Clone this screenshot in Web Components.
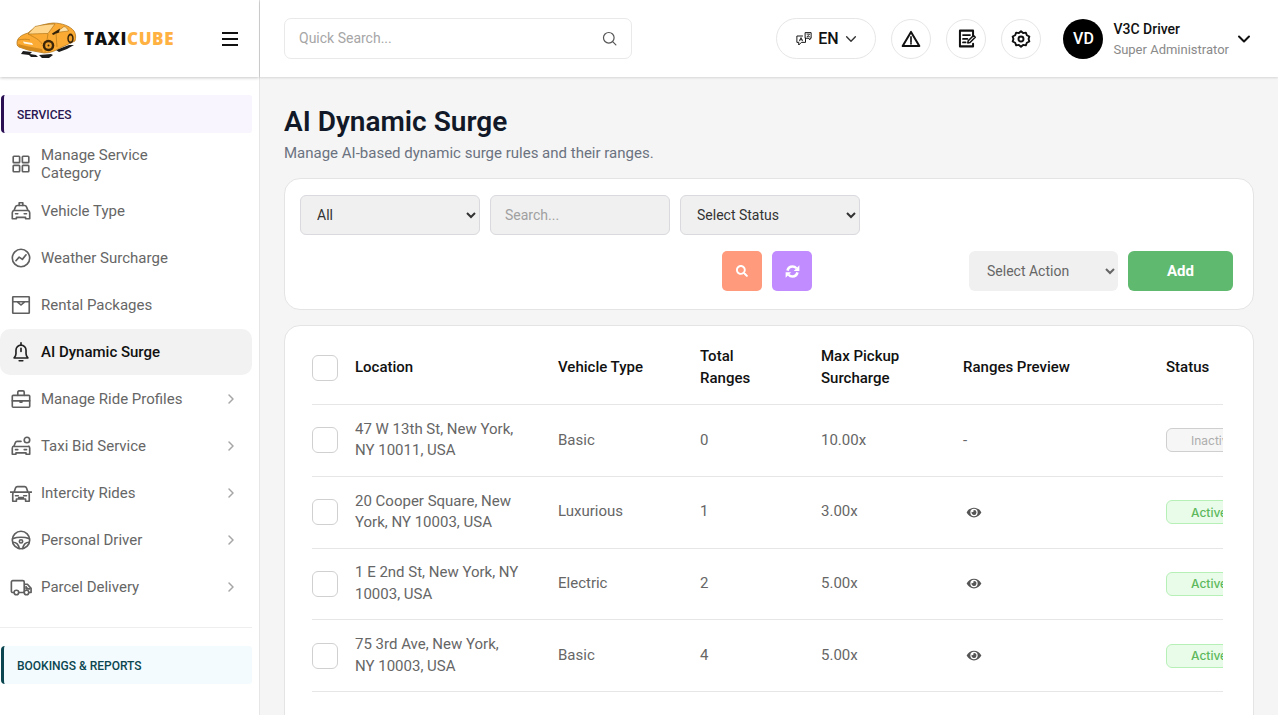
<!DOCTYPE html>
<html lang="en">
<head>
<meta charset="utf-8">
<title>AI Dynamic Surge</title>
<style>
	html, body { margin: 0; height: 100%; overflow: hidden; background: #f5f5f5; font-family: Roboto, "Liberation Sans", sans-serif; }
</style>
</head>
<body>
<app-shell>
	<side-bar slot="side">
		<section-label tone="violet">Services</section-label>
		<nav-item icon="grid">Manage Service Category</nav-item>
		<nav-item icon="taxi">Vehicle Type</nav-item>
		<nav-item icon="trend">Weather Surcharge</nav-item>
		<nav-item icon="box">Rental Packages</nav-item>
		<nav-item icon="bell" active>AI Dynamic Surge</nav-item>
		<nav-item icon="case" arrow>Manage Ride Profiles</nav-item>
		<nav-item icon="bid" arrow>Taxi Bid Service</nav-item>
		<nav-item icon="car" arrow>Intercity Rides</nav-item>
		<nav-item icon="wheel" arrow>Personal Driver</nav-item>
		<nav-item icon="truck" arrow>Parcel Delivery</nav-item>
		<section-label tone="teal" divider>Bookings &amp; Reports</section-label>
	</side-bar>
	<top-bar slot="top"></top-bar>
	<page-heading title="AI Dynamic Surge">Manage AI-based dynamic surge rules and their ranges.</page-heading>
	<filter-card></filter-card>
	<surge-table></surge-table>
</app-shell>

<script>
const ICONS = {
	grid: '<rect x="3.500" y="3.500" width="7" height="7" rx=".8"/><rect x="13.500" y="3.500" width="7" height="7" rx=".8"/><rect x="3.500" y="13.500" width="7" height="7" rx=".8"/><rect x="13.500" y="13.500" width="7" height="7" rx=".8"/>',
	taxi: '<path d="M2.500 20.500v-6.500c0-1.500.8-2.400 2-2.800L6 7.500C6.300 6.600 7 6 8 6h8c1 0 1.700.6 2 1.500l1.500 3.700c1.200.4 2 1.300 2 2.800v6.500h-4.500V19H7v1.500z"/><path d="M4.500 11.500h15M6 15h2.500M15.500 15H18M10 6V3h4v3"/>',
	trend: '<circle cx="12" cy="12" r="9.500"/><path d="M6.500 15l3.500-4 3.500 2.500 4-5"/>',
	box: '<rect x="3" y="3" width="18" height="18" rx=".5"/><path d="M3 8.500h18M8 8.500l4 3.500 4-3.500"/>',
	bell: '<path d="M4.500 18.500c1.500-1.500 2-2.500 2-4.500v-4a5.500 5.500 0 0 1 11 0v4c0 2 .5 3 2 4.500z"/><path d="M10 21.500h4M12 8v3.500M12 2v2.500"/>',
	case: '<rect x="2.500" y="8" width="19" height="13" rx="1"/><path d="M8.500 8V4.500c0-.8.500-1.300 1.300-1.300h4.400c.8 0 1.300.5 1.300 1.300V8M2.500 14H21.500M11 14v1.500h2V14"/>',
	bid: '<path d="M2.500 21v-6.500c0-1.400.7-2.300 2-2.700l1.400-3.600c.3-.8 1-1.200 1.800-1.200H12M2.500 21h4v-1.500h11V21h4v-6.500c0-1-.4-1.800-1-2.300M4.500 12.500h15M6 16h2.500M15.500 16H18"/><circle cx="18.500" cy="5.500" r="3"/>',
	car: '<path d="M3 21V13c0-1 .6-1.800 1.500-2.200L6 6.500C6.300 5.700 7 5 8 5h8c1 0 1.700.7 2 1.500l1.500 4.300C20.400 11.200 21 12 21 13v8h-4v-2.500H7V21zM4.500 11h15M.5 11h4M19.500 11h4M6 15h3M15 15h3M9.500 18.500V17h5v1.500"/>',
	wheel: '<circle cx="12" cy="12" r="9.500"/><path d="M2.800 10.500c3-1 6.200-1.500 9.200-1.500s6.200.5 9.200 1.500M3 14.500c3.500 0 6.500 2.500 7 7M21 14.500c-3.500 0-6.500 2.500-7 7"/><circle cx="12" cy="13.500" r="1.800"/>',
	truck: '<path d="M4.500 18H3c-.8 0-1.500-.7-1.500-1.500V6.500C1.500 5.700 2.200 5 3 5h11c.8 0 1.500.7 1.500 1.500V18H9.500M15.500 9h3.500l4 4.500V18h-2"/><circle cx="7" cy="18" r="2.500"/><circle cx="18" cy="18" r="2.500"/><path d="M17.500 11.500v2.500h4" fill="currentColor"/>',
	warn: '<path d="M12 3.500L2 20.500h20z" stroke-width="2.400" stroke-linejoin="round"/><path d="M12 9.500v6M12 17.300v.7" stroke-width="2"/>',
	note: '<path d="M19.500 9.500V3h-15v18h15v-3" stroke-width="2.300"/><path d="M8 8h8M8 12.500h5M8 16.500h3" stroke-width="2"/><path d="M13.500 17l.5-2.500 6-6 2 2-6 6z" stroke-width="1.800"/>',
	gear: '<path d="M12 2.800l2.500 2.100 3.300-.5 1.200 3.100 3 1.500-.9 3 .9 3-3 1.500-1.200 3.100-3.300-.5-2.500 2.100-2.500-2.100-3.300.5-1.200-3.100-3-1.500.9-3-.9-3 3-1.500 1.200-3.100 3.300.5z" stroke-width="2.300" stroke-linejoin="round"/><circle cx="12" cy="12" r="3" stroke-width="2.300"/>',
	lang: '<path d="M14 3.500h7.500V11H20v2l-2.500-2H14z"/><path d="M10 8H2.500v8.500H5V20l3.500-3.500H14V11"/><path d="M6 14.500l2-4.500 2 4.500M6.800 13h2.400M16 5.500h3.500l-3.500 3.500h3.500" stroke-width="1.100"/>'
};

function icon(name, size, width = 1.6) {
	return `<svg width="${size}" height="${size}" viewBox="0 0 24 24" fill="none" stroke="currentColor" stroke-width="${width}" stroke-linecap="round" stroke-linejoin="round">${ICONS[name]}</svg>`;
}

const CHEVRON = (size, width) => `<svg width="${size}" height="${size}" viewBox="0 0 16 16" fill="none" stroke="currentColor" stroke-width="${width}" stroke-linecap="round" stroke-linejoin="round"><path d="M3 5.500l5 5 5-5"/></svg>`;

class AppShell extends HTMLElement {
	constructor() {
		super();
		this.attachShadow({ mode: 'open' });
	}

	connectedCallback() {
		this.shadowRoot.innerHTML = `
			<style>
				:host { display: grid; grid-template-columns: 260px 1fr; grid-template-rows: 78px 1fr; height: 715px; overflow: hidden; }
				.side { grid-row: 1 / 3; display: block; min-height: 0; }
				main { min-width: 0; padding: 27px 24px 0; display: flex; flex-direction: column; }
			</style>
			<div class="side"><slot name="side"></slot></div>
			<slot name="top"></slot>
			<main><slot></slot></main>
		`;
	}
}

class SideBar extends HTMLElement {
	constructor() {
		super();
		this.attachShadow({ mode: 'open' });
	}

	connectedCallback() {
		this.shadowRoot.innerHTML = `
			<style>
				:host { display: flex; flex-direction: column; height: 715px; box-sizing: border-box; background: #fff; border-right: 1px solid #e6e6e6; }
				header { flex: none; height: 77px; display: flex; align-items: center; box-shadow: 0 1px 3px rgba(0, 0, 0, .22); padding-left: 10px; padding-right: 21px; position: relative; }
				.brand { font: 800 17px "Open Sans", sans-serif; letter-spacing: .6px; margin-left: 4px; color: #111; }
				.brand b { font-weight: 800; color: #ffb142; }
				.burger { margin-left: auto; width: 16px; height: 14px; border-top: 2px solid #111; border-bottom: 2px solid #111; box-sizing: border-box; display: flex; align-items: center; }
				.burger i { display: block; width: 100%; height: 2px; background: #111; }
				nav { padding-top: 18px; width: 252px; }
			</style>
			<header>
				<svg width="70" height="45" viewBox="0 0 70 45" style="flex:none">
					<path d="M13 35l9 1-2 2 6 1 2 2-7 0-2-2-8-1zM29 39l12-1 2 1-4 3-7 0zM46 34l13-5 5 0-7 4-8 3z" fill="#1c1c1c"/>
					<path d="M7 27C7 22 11 19 18 17 23 12 32 8 43 7 52 7 60 10 64 15 66 18 66 22 65 25L48 33C45 35 40 37 34 37L18 34 9 31C7 30 7 28 7 27Z" fill="#fbab33" stroke="#a86d12" stroke-width=".7"/>
					<path d="M25 10.500C31 9 38 8 45 8L38 17.500C31 17.500 24 18 18 18Z" fill="#ffd68c" stroke="#a86d12" stroke-width=".6"/>
					<path d="M46 16.500L54 10.500C56 11 57.500 12.500 58.500 15Z" fill="#ffe2a8" stroke="#a86d12" stroke-width=".6"/>
					<path d="M42 17.500L50 12.500 49 16.500 43 19Z" fill="#33210a"/>
					<path d="M18 18C24 21 30 24 32 28M38 18L35 36M46 17L47 31M8 24C13 23 17 23 20 24" fill="none" stroke="#b5771a" stroke-width=".7"/>
					<path d="M13 25.500l9 1.500 1 2-9-1.500z" fill="#fff7e6"/>
					<path d="M9 31L18 34 33 36 32 33 16 30 8 28z" fill="#d58a1e"/>
					<circle cx="38.500" cy="29.500" r="5.800" fill="#3a2508"/>
					<circle cx="38.500" cy="29.500" r="3.300" fill="#efa02c"/>
					<circle cx="38.500" cy="29.500" r="1" fill="#3a2508"/>
					<ellipse cx="60.500" cy="22.500" rx="3.200" ry="5" fill="#3a2508"/>
					<ellipse cx="60.500" cy="22.500" rx="1.700" ry="3" fill="#efa02c"/>
				</svg>
				<span class="brand">TAXI<b>CUBE</b></span>
				<span class="burger"><i></i></span>
			</header>
			<nav><slot></slot></nav>
		`;
	}
}

class SectionLabel extends HTMLElement {
	constructor() {
		super();
		this.attachShadow({ mode: 'open' });
	}

	connectedCallback() {
		const teal = this.getAttribute('tone') === 'teal';
		const divider = this.hasAttribute('divider');
		this.shadowRoot.innerHTML = `
			<style>
				:host { display: block; margin: ${divider ? '17px 0 0' : '0 0 8px'}; ${divider ? 'border-top: 1px solid #eee; padding-top: 18px;' : ''} }
				div { margin-left: 1px; height: 38px; box-sizing: border-box; padding: 1px 0 0 13px; display: flex; align-items: center; border-left: 3px solid ${teal ? '#0b4650' : '#2a0f52'}; border-radius: 4px 3px 3px 4px; background: ${teal ? '#f3fbfe' : '#f8f5fe'}; color: ${teal ? '#0b4650' : '#2a1650'}; font: 500 12px Roboto, sans-serif; text-transform: uppercase; }
			</style>
			<div><slot></slot></div>
		`;
	}
}

class NavItem extends HTMLElement {
	constructor() {
		super();
		this.attachShadow({ mode: 'open' });
	}

	connectedCallback() {
		const active = this.hasAttribute('active');
		const arrow = this.hasAttribute('arrow')
			? '<svg class="arrow" width="14" height="14" viewBox="0 0 14 14" fill="none" stroke="#a6a6a6" stroke-width="1.500" stroke-linecap="round" stroke-linejoin="round"><path d="M5 3l4 4-4 4"/></svg>'
			: '';
		this.shadowRoot.innerHTML = `
			<style>
				:host { display: flex; align-items: center; height: 46px; margin-bottom: 1px; padding: 0 14px 0 12px; border-radius: 10px; font: ${active ? 500 : 400} 15px/18px Roboto, sans-serif; color: ${active ? '#111' : '#666'}; background: ${active ? '#f2f2f2' : 'transparent'}; }
				.ico { flex: none; width: 18px; height: 18px; margin-right: 11px; display: flex; align-items: center; justify-content: center; color: ${active ? '#222' : '#5f5f5f'}; }
				.ico svg { flex: none; }
				.label { max-width: ${this.textContent.length > 20 && !this.hasAttribute('arrow') ? '130px' : 'none'}; }
				.arrow { margin-left: auto; }
			</style>
			<span class="ico">${icon(this.getAttribute('icon'), 22, 1.8)}</span>
			<span class="label"><slot></slot></span>
			${arrow}
		`;
	}
}

class TopBar extends HTMLElement {
	constructor() {
		super();
		this.attachShadow({ mode: 'open' });
	}

	connectedCallback() {
		this.shadowRoot.innerHTML = `
			<style>
				:host { display: flex; align-items: center; height: 77px; box-sizing: border-box; padding: 0 26px 0 24px; background: #fff; box-shadow: 0 1px 2px rgba(0, 0, 0, .12); position: relative; }
				.search { width: 348px; height: 41px; box-sizing: border-box; border: 1px solid #e9e9e9; border-radius: 7px; display: flex; align-items: center; padding: 0 13px 1px 14px; color: #555; }
				.search input { flex: 1; min-width: 0; border: 0; outline: 0; padding: 0; background: none; font: 14px Roboto, sans-serif; }
				.search input::placeholder { color: #a6a6a6; }
				.lang { margin-left: auto; width: 100px; height: 41px; box-sizing: border-box; border: 1px solid #e6e6e6; border-radius: 21px; display: flex; align-items: center; justify-content: center; gap: 5px; font: 500 16px Roboto, sans-serif; color: #111; }
				.lang svg:last-child { color: #333; }
				.round { width: 40px; height: 40px; box-sizing: border-box; margin-left: 15px; border: 1px solid #e6e6e6; border-radius: 50%; display: flex; align-items: center; justify-content: center; color: #111; }
				.avatar { flex: none; width: 40px; height: 40px; margin-left: 22px; border-radius: 50%; background: #000; color: #fff; display: flex; align-items: center; justify-content: center; font: 500 16px Roboto, sans-serif; }
				.who { margin-left: 10px; display: flex; flex-direction: column; gap: 3px; padding-top: 1px; }
				.who strong { font: 500 14px/18px Roboto, sans-serif; color: #111; }
				.who span { font: 13px/17px Roboto, sans-serif; color: #8a8a8a; }
				.caret { margin-left: 7px; color: #111; display: flex; }
			</style>
			<label class="search">
				<input placeholder="Quick Search...">
				<svg width="17" height="17" viewBox="0 0 24 24" fill="none" stroke="currentColor" stroke-width="1.700" stroke-linecap="round"><circle cx="11" cy="11" r="7.500"/><path d="M16.500 16.500l4.500 4.500"/></svg>
			</label>
			<div class="lang">${icon('lang', 18, 1.3)}<span>EN</span>${CHEVRON(14, 1.6)}</div>
			<div class="round">${icon('warn', 20)}</div>
			<div class="round">${icon('note', 21)}</div>
			<div class="round">${icon('gear', 20)}</div>
			<div class="avatar">VD</div>
			<div class="who"><strong>V3C Driver</strong><span>Super Administrator</span></div>
			<span class="caret">${CHEVRON(16, 2)}</span>
		`;
	}
}

class PageHeading extends HTMLElement {
	constructor() {
		super();
		this.attachShadow({ mode: 'open' });
	}

	connectedCallback() {
		this.shadowRoot.innerHTML = `
			<style>
				:host { display: block; margin-bottom: 14px; }
				h1 { margin: 0 0 3px; font: 600 28px/34px Roboto, sans-serif; color: #111827; }
				p { margin: 0; font: 15px/22px Roboto, sans-serif; color: #6b7280; }
			</style>
			<h1>${this.getAttribute('title')}</h1>
			<p><slot></slot></p>
		`;
	}
}

class FilterCard extends HTMLElement {
	constructor() {
		super();
		this.attachShadow({ mode: 'open' });
	}

	connectedCallback() {
		this.shadowRoot.innerHTML = `
			<style>
				:host { display: block; box-sizing: border-box; height: 132px; padding: 16px 20px 18px 15px; background: #fff; border: 1px solid #e4e4e4; border-radius: 16px; }
				.row { display: flex; gap: 10px; height: 40px; }
				.row + .row { margin-top: 16px; }
				select, input { box-sizing: border-box; height: 40px; width: 180px; margin: 0; border: 1px solid #d9d9de; border-radius: 6px; background-color: #f0f0f0; padding: 0 0 0 12px; font: 14px Roboto, sans-serif; color: #333; outline: 0; }
				input { padding-left: 14px; }
				input::placeholder { color: #a0a0a0; }
				.tools { margin-left: 422px; display: flex; gap: 10px; }
				.tools button { width: 40px; height: 40px; border: 0; border-radius: 5px; padding: 0; color: #fff; display: flex; align-items: center; justify-content: center; }
				.find { background: #ff9a7d; }
				.reset { background: #c08cff; }
				.actions { margin-left: auto; display: flex; gap: 10px; }
				.actions select { width: 149px; border: 0; padding-left: 14px; color: #666; }
				.add { width: 105px; height: 40px; border: 0; border-radius: 6px; background: #5fb96f; color: #fff; font: 700 15px Roboto, sans-serif; }
			</style>
			<div class="row">
				<select><option>All</option></select>
				<input placeholder="Search...">
				<select><option>Select Status</option></select>
			</div>
			<div class="row">
				<div class="tools">
					<button class="find" aria-label="Search">
						<svg width="12" height="12" viewBox="0 0 512 512" fill="currentColor"><path d="M505 442.700L405.300 343c-4.500-4.500-10.600-7-17-7H372c27.600-35.300 44-79.700 44-128C416 93.100 322.900 0 208 0S0 93.100 0 208s93.100 208 208 208c48.300 0 92.700-16.400 128-44v16.300c0 6.400 2.500 12.500 7 17l99.700 99.700c9.400 9.400 24.600 9.400 33.900 0l28.300-28.300c9.400-9.400 9.400-24.600.1-34zM208 336c-70.700 0-128-57.200-128-128 0-70.700 57.200-128 128-128 70.700 0 128 57.200 128 128 0 70.700-57.200 128-128 128z"/></svg>
					</button>
					<button class="reset" aria-label="Reset">
						<svg width="15" height="15" viewBox="0 0 24 24" fill="none" stroke="currentColor" stroke-width="4.200"><path d="M4 10.500C5 6.500 8.200 4 12 4c2.500 0 4.600 1 6.200 2.800M20 13.500c-1 4-4.200 6.500-8 6.500-2.500 0-4.600-1-6.200-2.800"/><path d="M23 2v9h-9zM1 22v-9h9z" fill="currentColor" stroke="none"/></svg>
					</button>
				</div>
				<div class="actions">
					<select><option>Select Action</option></select>
					<button class="add">Add</button>
				</div>
			</div>
		`;
	}
}

class StatusPill extends HTMLElement {
	constructor() {
		super();
		this.attachShadow({ mode: 'open' });
	}

	connectedCallback() {
		const on = this.getAttribute('state') === 'on';
		this.shadowRoot.innerHTML = `
			<style>
				:host { display: inline-flex; align-items: center; height: 24px; box-sizing: border-box; padding: 0 24px; border-radius: 6px; border: 1px solid ${on ? '#b7f0b7' : '#cfcfcf'}; background: ${on ? '#e9fce9' : '#f6f6f6'}; color: ${on ? '#5cb85c' : '#adadad'}; font: ${on ? 500 : 400} 12px Inter, sans-serif; }
			</style>
			<slot></slot>
		`;
	}
}

const SURGE_ROWS = [
	['47 W 13th St, New York, NY 10011, USA', 'Basic', '0', '10.00x', false, false],
	['20 Cooper Square, New York, NY 10003, USA', 'Luxurious', '1', '3.00x', true, true],
	['1 E 2nd St, New York, NY 10003, USA', 'Electric', '2', '5.00x', true, true],
	['75 3rd Ave, New York, NY 10003, USA', 'Basic', '4', '5.00x', true, true]
];

const EYE = '<svg width="16" height="13" viewBox="0 0 576 512" fill="#555"><path d="M572.500 241.400C518.300 135.600 410.900 64 288 64S57.700 135.600 3.500 241.400a32.400 32.400 0 0 0 0 29.200C57.700 376.400 165.100 448 288 448s230.300-71.600 284.500-177.400a32.400 32.400 0 0 0 0-29.200zM288 400a144 144 0 1 1 144-144 143.900 143.900 0 0 1-144 144zm0-240a95.300 95.300 0 0 0-25.300 3.800 47.900 47.900 0 0 1-66.900 66.900A95.800 95.800 0 1 0 288 160z"/></svg>';

class SurgeTable extends HTMLElement {
	constructor() {
		super();
		this.attachShadow({ mode: 'open' });
	}

	connectedCallback() {
		const rows = SURGE_ROWS.map(([place, type, ranges, max, eye, on]) => `
			<div class="row">
				<span class="box"></span>
				<span class="place">${place}</span>
				<span>${type}</span>
				<span>${ranges}</span>
				<span>${max}</span>
				<span>${eye ? EYE : '-'}</span>
				<span><status-pill state="${on ? 'on' : 'off'}">${on ? 'Active' : 'Inactive'}</status-pill></span>
			</div>`).join('');
		this.shadowRoot.innerHTML = `
			<style>
				:host { display: block; margin-top: 15px; flex: none; height: 420px; box-sizing: border-box; padding: 0 30px 0 27px; background: #fff; border: 1px solid #e4e4e4; border-radius: 16px; }
				.scroll { overflow: hidden; }
				.row { display: grid; grid-template-columns: 43px 203px 142px 121px 142px 203px 120px; align-items: center; width: 974px; box-sizing: border-box; height: 71.75px; border-bottom: 1px solid #e6e6e6; font: 15px/21.600px Roboto, sans-serif; color: #666; }
				.row.head { height: 79px; padding-top: 5px; font: 500 15px/21.600px Roboto, sans-serif; color: #111; }
				.box { width: 26px; height: 26px; box-sizing: border-box; border: 1px solid #d0d0d0; border-radius: 6px; background: #fff; }
				.place { width: 166px; }
				.narrow { width: 80px; }
				svg { display: block; margin-left: 3px; }
			</style>
			<div class="scroll">
				<div class="row head">
					<span class="box"></span>
					<span>Location</span>
					<span>Vehicle Type</span>
					<span class="narrow">Total Ranges</span>
					<span class="narrow">Max Pickup Surcharge</span>
					<span>Ranges Preview</span>
					<span>Status</span>
				</div>
				${rows}
			</div>
		`;
	}
}

customElements.define('app-shell', AppShell);
customElements.define('side-bar', SideBar);
customElements.define('section-label', SectionLabel);
customElements.define('nav-item', NavItem);
customElements.define('top-bar', TopBar);
customElements.define('page-heading', PageHeading);
customElements.define('filter-card', FilterCard);
customElements.define('status-pill', StatusPill);
customElements.define('surge-table', SurgeTable);
</script>
</body>
</html>
